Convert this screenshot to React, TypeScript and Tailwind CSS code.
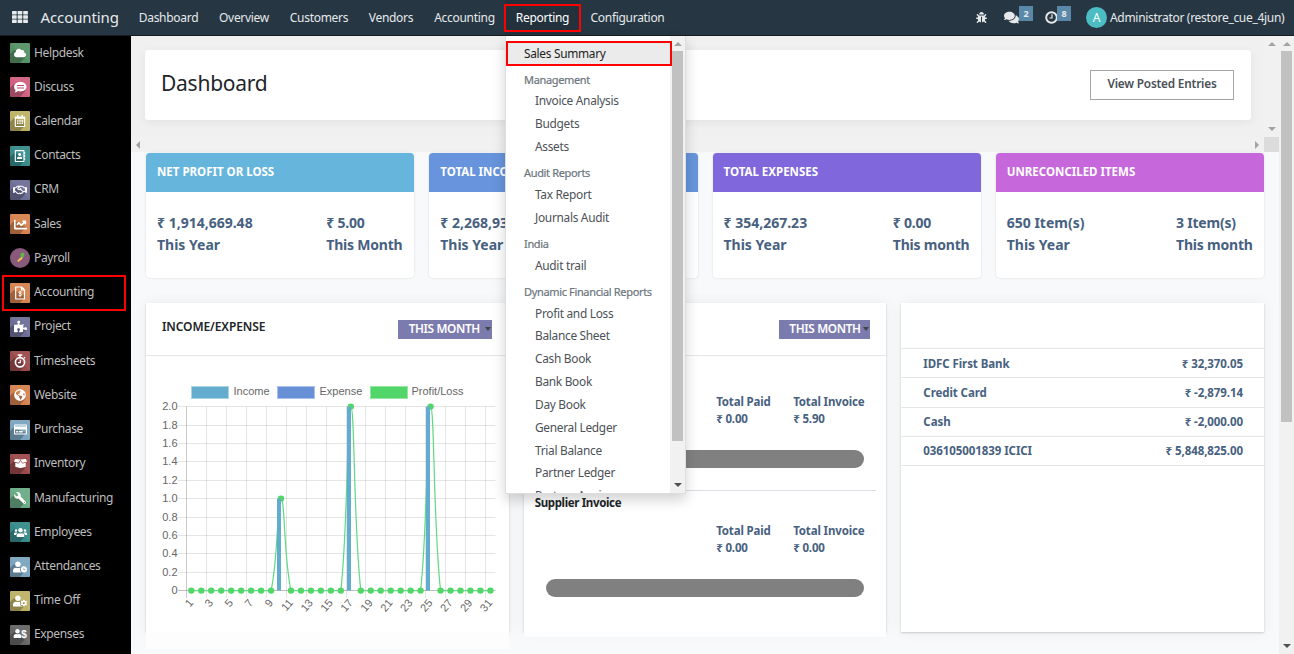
import type { ReactNode } from 'react';
import {
  FaBoxOpen,
  FaBug,
  FaChartLine,
  FaCloud,
  FaComments,
  FaGlobeAmericas,
  FaPuzzlePiece,
  FaRegAddressBook,
  FaRegCalendarAlt,
  FaRegCreditCard,
  FaRegHandshake,
  FaUser,
  FaUserClock,
  FaUserCog,
  FaUsers,
  FaWrench,
} from 'react-icons/fa';

const navItems = [
  { label: 'Dashboard', box: 'w-[79px]' },
  { label: 'Overview', box: 'w-[72px]' },
  { label: 'Customers', box: 'w-[78px]' },
  { label: 'Vendors', box: 'w-[66px]' },
  { label: 'Accounting', box: 'w-[81px]' },
  { label: 'Reporting', box: 'w-[75px] bg-[#22313c] text-white' },
  { label: 'Configuration', box: 'w-[95px]' },
];

const ClockIcon = () => (
  <svg viewBox="0 0 13 13" className="size-[13px]" fill="none" stroke="#e6e9eb">
    <circle cx="6.500" cy="6.500" r="5.300" strokeWidth="1.900" />
    <path d="M7 3.200v3.800H4.400" strokeWidth="1.200" />
  </svg>
);

const DiscussIcon = () => (
  <svg viewBox="0 0 14 14" className="size-[14px]">
    <path d="M7.300 2c3.500 0 6.200 2 6.200 4.700s-2.700 4.700-6.200 4.700c-.8 0-1.500-.1-2.200-.3C4.200 11.900 3 12.300 1.400 12.400c.7-.7 1.100-1.400 1.200-2.200C1.600 9.300 1.100 8 1.100 6.700 1.100 4 3.900 2 7.300 2z" fill="#fff" />
    <path d="M4 5.500h7M4 8h7" stroke="#b9506f" strokeWidth="1" />
  </svg>
);

const FileDollarIcon = () => (
  <svg viewBox="0 0 14 14" className="size-[14px]">
    <path d="M2.700 1h6l2.800 2.800V13H2.700z M8.500 1v3h3" fill="none" stroke="#fff" strokeWidth="1.200" />
    <path d="M8.700 6.200c-.7-.6-3-.6-3 .5 0 1.300 3 .6 3 2 0 1.200-2.300 1.200-3.200.4M7.100 5v6" fill="none" stroke="#fff" strokeWidth=".9" />
  </svg>
);

const StopwatchIcon = () => (
  <svg viewBox="0 0 14 14" className="size-[14px]" fill="none" stroke="#fff">
    <circle cx="7" cy="8.300" r="4.600" strokeWidth="1.700" />
    <path d="M4.700 .9h4.600M7 1v2.500M11 3.300l1 1" strokeWidth="1.500" />
    <path d="M7.300 5.800v2.800H5" strokeWidth="1.100" />
  </svg>
);

const PayrollIcon = () => (
  <svg viewBox="0 0 20 20" className="size-5">
    <path d="M10.500 6c0-1.200 3.200-1.800 3.800-.8.500 1.200-.2 4.300-1.800 4.600-1.300.3-2-.5-2-1.500z" fill="#5fb347" />
    <path d="M11.500 9l-1.700 1.200-2.600 2.600 1 1.100 3.400-2.500 1.200-1.800z" fill="#f3c34f" />
  </svg>
);

const UserDollarIcon = () => (
  <div className="flex items-end">
    <FaUser className="mb-[2px] size-[9px]" />
    <span className="-ml-px font-[Liberation_Sans] text-[10px] font-bold leading-[10px]">$</span>
  </div>
);

const apps: { label: string; bg: string; icon: ReactNode; round?: boolean; marked?: boolean }[] = [
  { label: 'Helpdesk', bg: 'bg-[#569166]', icon: <FaCloud className="size-[12px]" /> },
  { label: 'Discuss', bg: 'bg-[#d0607f]', icon: <DiscussIcon /> },
  { label: 'Calendar', bg: 'bg-[#bdb266]', icon: <FaRegCalendarAlt className="size-[12px]" /> },
  { label: 'Contacts', bg: 'bg-[#378b8b]', icon: <FaRegAddressBook className="size-[12px]" /> },
  { label: 'CRM', bg: 'bg-[#6d6e96]', icon: <FaRegHandshake className="size-[14px]" /> },
  { label: 'Sales', bg: 'bg-[#d4824f]', icon: <FaChartLine className="size-[13px]" /> },
  { label: 'Payroll', bg: 'bg-[#875a7b]', icon: <PayrollIcon />, round: true },
  { label: 'Accounting', bg: 'bg-[#d4824f]', icon: <FileDollarIcon />, marked: true },
  { label: 'Project', bg: 'bg-[#6d6e96]', icon: <FaPuzzlePiece className="size-[13px]" /> },
  { label: 'Timesheets', bg: 'bg-[#9a4a4c]', icon: <StopwatchIcon /> },
  { label: 'Website', bg: 'bg-[#d4824f]', icon: <FaGlobeAmericas className="size-[12px]" /> },
  { label: 'Purchase', bg: 'bg-[#7ba5bf]', icon: <FaRegCreditCard className="size-[13px]" /> },
  { label: 'Inventory', bg: 'bg-[#9a4a4c]', icon: <FaBoxOpen className="size-[13px]" /> },
  { label: 'Manufacturing', bg: 'bg-[#6aaa85]', icon: <FaWrench className="size-[12px] -scale-x-100" /> },
  { label: 'Employees', bg: 'bg-[#378b8b]', icon: <FaUsers className="size-[13px]" /> },
  { label: 'Attendances', bg: 'bg-[#7ba5bf]', icon: <FaUserClock className="size-[14px]" /> },
  { label: 'Time Off', bg: 'bg-[#bdb266]', icon: <FaUserCog className="size-[14px]" /> },
  { label: 'Expenses', bg: 'bg-[#666666]', icon: <UserDollarIcon /> },
];

function Sidebar() {
  return (
    <nav className="flex w-[131px] shrink-0 flex-col bg-black">
      {apps.map((a) => (
        <div key={a.label} className="relative flex h-[34.235px] shrink-0 items-start pl-[10px] pt-[7px]">
          <div
            className={`relative flex size-5 items-center justify-center overflow-hidden text-white ${a.bg} ${a.round ? 'rounded-full' : 'rounded-[1px]'}`}
          >
            {!a.round && (
              <svg viewBox="0 0 20 20" className="absolute inset-0 size-5">
                <path d="M4 7 L0 11 V20 H10 L16 13z" fill="#000" fillOpacity=".25" />
                <path d="M0 0H20V20z" fill="#fff" fillOpacity=".05" />
              </svg>
            )}
            <div className="relative">{a.icon}</div>
          </div>
          <span className="ml-[4px] mt-[-0.5px] text-[12px] leading-5 tracking-[-0.35px] text-[#bdbdbd]">{a.label}</span>
          {a.marked && <div className="absolute left-[2px] top-[-1px] h-[36px] w-[124px] border-2 border-[#f00]" />}
        </div>
      ))}
    </nav>
  );
}

type Dir = 'up' | 'down' | 'left' | 'right';
const arrowPaths: Record<Dir, string> = {
  up: 'M0 6L4 2L8 6z',
  down: 'M0 2L4 6L8 2z',
  left: 'M6 0L2 4L6 8z',
  right: 'M2 0L6 4L2 8z',
};
const Arrow = ({ dir, dark }: { dir: Dir; dark?: boolean }) => (
  <svg viewBox="0 0 8 8" className="size-2 shrink-0">
    <path d={arrowPaths[dir]} fill={dark ? '#505050' : '#a3a3a3'} />
  </svg>
);

function Navbar() {
  return (
    <header className="flex h-9 shrink-0 items-center border-b border-[#141d24] bg-[#263743] text-[12px] text-[#e6e9eb]">
      <svg viewBox="0 0 16 12" className="mb-px ml-3 h-3 w-4 shrink-0">
        {[0, 4.2, 8.4].map((y) => [0, 5.6, 11.2].map((x) => <rect key={`${x}-${y}`} x={x} y={y} width="4.700" height="3.500" rx=".4" fill="#e8ebed" />))}
      </svg>
      <div className="ml-[12.500px] w-[88.500px] whitespace-nowrap text-[15px] tracking-[-0.1px]">Accounting</div>
      <div className="flex h-full">
        {navItems.map((n) => (
          <div key={n.label} className={`flex items-center justify-center whitespace-nowrap pt-px tracking-[-0.3px] ${n.box}`}>
            {n.label}
          </div>
        ))}
      </div>
      <div className="ml-auto flex h-full items-center">
        <FaBug className="mb-px size-[11px]" />
        <div className="relative ml-[17px] flex h-full w-[29px] items-center">
          <FaComments className="size-[15px]" />
          <span className="absolute left-[15px] top-[6px] flex h-[15px] w-[14px] items-center justify-center bg-[#5a88a8] text-[9px] font-bold">2</span>
        </div>
        <div className="relative ml-[12px] flex h-full w-[27px] items-center">
          <ClockIcon />
          <span className="absolute left-[12px] top-[6px] flex h-[15px] w-[14px] items-center justify-center bg-[#5a88a8] text-[9px] font-bold">8</span>
        </div>
        <div className="ml-[14px] flex size-[21px] items-center justify-center rounded-full bg-[#4dbdc4] text-[12px] text-white">A</div>
        <div className="ml-[3px] w-[184px] whitespace-nowrap pt-px tracking-[-0.3px]">Administrator (restore_cue_4jun)</div>
      </div>
    </header>
  );
}

function HeaderRegion() {
  return (
    <div className="flex h-[117px] shrink-0 flex-col">
      <div className="flex h-[101px] bg-[#f0f0f0]">
        <div className="flex-1 pl-[14px] pr-[13px] pt-[14px]">
          <div className="flex h-[70px] items-center justify-between rounded-[3px] bg-white pl-4 pr-[17px] shadow-[0_2px_10px_rgba(0,0,0,0.06)]">
            <h1 className="mb-[3px] text-[21px] tracking-[-0.25px] text-[#212529]">Dashboard</h1>
            <button className="h-[30px] w-[144px] border border-[#a5a5a5] pb-[2px] text-[11.800px] font-semibold tracking-[-0.2px] text-[#495057]">
              View Posted Entries
            </button>
          </div>
        </div>
        <div className="flex w-[15px] flex-col items-center justify-between bg-[#f1f1f1] py-1">
          <Arrow dir="up" />
          <Arrow dir="down" />
        </div>
      </div>
      <div className="flex h-[15px]">
        <div className="flex flex-1 items-center justify-between bg-[#f1f1f1] px-[3px]">
          <Arrow dir="left" />
          <Arrow dir="right" />
        </div>
        <div className="w-[15px] bg-[#dcdcdc]" />
      </div>
    </div>
  );
}

const stats = [
  { title: 'NET PROFIT OR LOSS', bg: 'bg-[#66b5dc]', a: '₹ 1,914,669.48', b: '₹ 5.00', m: 'This Month' },
  { title: 'TOTAL INCOME', bg: 'bg-[#6794dc]', a: '₹ 2,268,936.71', b: '₹ 5.00', m: 'This Month' },
  { title: 'TOTAL EXPENSES', bg: 'bg-[#8067dc]', a: '₹ 354,267.23', b: '₹ 0.00', m: 'This month' },
  { title: 'UNRECONCILED ITEMS', bg: 'bg-[#c767dc]', a: '650 Item(s)', b: '3 Item(s)', m: 'This month' },
];

function Stats() {
  return (
    <div className="grid grid-cols-4 gap-x-[15px]">
      {stats.map((s) => (
        <div key={s.title} className="h-[125px] overflow-hidden rounded-[4px] bg-white shadow-[0_0_2px_rgba(0,0,0,0.16)]">
          <div className={`flex h-[39px] items-center px-[11px] pb-[2px] text-[11.500px] font-bold text-white ${s.bg}`}>{s.title}</div>
          <div className="flex justify-between px-[11px] pt-5 text-[14px] font-bold leading-[22px] text-[#47617f]">
            <div>
              <p>{s.a}</p>
              <p>This Year</p>
            </div>
            <div className="w-[77px] whitespace-nowrap tracking-[-0.2px]">
              <p>{s.b}</p>
              <p>{s.m}</p>
            </div>
          </div>
        </div>
      ))}
    </div>
  );
}

const days = Array.from({ length: 31 }, (_, i) => i);
const px = (i: number) => 45.3 + i * 9.97;
const py = (v: number) => 287.6 - v * 92;
const profit = days.map((i) => (i === 9 ? 1 : i === 16 || i === 24 ? 2 : 0));

function curve() {
  let d = `M${px(0)} ${py(0)}`;
  for (let i = 1; i < 31; i++) {
    const v = profit[i];
    const prev = profit[i - 1];
    const x0 = px(i - 1);
    const x1 = px(i);
    if (v > 0) d += `C${x0 + 7.4} ${py(v * 0.37)} ${x1 - 4} ${py(v)} ${x1} ${py(v)}`;
    else if (prev > 0) d += `C${x0 + 4} ${py(prev)} ${x1 - 7.4} ${py(prev * 0.37)} ${x1} ${py(0)}`;
    else d += `L${x1} ${py(0)}`;
  }
  return d;
}

function Chart() {
  return (
    <svg viewBox="0 0 362 329" className="absolute left-0 top-0 h-[329px] w-[362px]" fontFamily="Liberation Sans, sans-serif" fontSize="11" fill="#666">
      <rect x="45.500" y="83.500" width="37" height="12" fill="#65adce" stroke="#a9d3e6" />
      <rect x="131.500" y="83.500" width="37" height="12" fill="#6890d6" stroke="#a9c4ec" />
      <rect x="224.500" y="83.500" width="37" height="12" fill="#52d669" stroke="#92e8a2" />
      <text x="87.500" y="92">Income</text>
      <text x="173.500" y="92">Expense</text>
      <text x="265.500" y="92">Profit/Loss</text>
      {Array.from({ length: 11 }, (_, i) => (
        <g key={i}>
          <path d={`M32 ${Math.round(103.6 + i * 18.4 - 0.5) + 0.5}H349.500`} stroke="#000" strokeOpacity={i === 10 ? 0.25 : 0.1} />
          <text x="31.500" y={107.2 + i * 18.4} textAnchor="end">
            {i === 10 ? '0' : ((10 - i) / 5).toFixed(1)}
          </text>
        </g>
      ))}
      {Array.from({ length: 16 }, (_, i) => {
        const x = Math.floor(40.5 + i * 19.94) + 0.5;
        return (
          <g key={i}>
            <path d={`M${x} 103.500V295`} stroke="#000" strokeOpacity={i === 0 ? 0.2 : 0.1} />
            <text transform={`translate(${px(i * 2) - 0.5} 297.500) rotate(-50)`} textAnchor="end" y="4">
              {i * 2 + 1}
            </text>
          </g>
        );
      })}
      <path d={curve()} fill="none" stroke="#5fd982" strokeWidth="1.200" />
      {days.map((i) => (
        <circle key={i} cx={px(i)} cy={py(profit[i])} r="3.200" fill="#52d669" />
      ))}
      {days.filter((i) => profit[i] > 0).map((i) => (
        <rect key={i} x={Math.round(px(i) - 4.2)} y={py(profit[i])} width="4" height={profit[i] * 92} fill="#62acd0" />
      ))}
    </svg>
  );
}

const MonthSelect = ({ box }: { box: string }) => (
  <div className={`flex h-[19px] items-center justify-between whitespace-nowrap bg-[#7c7bad] text-[11.800px] font-semibold tracking-[-0.35px] text-white ${box}`}>
    THIS MONTH
    <svg viewBox="0 0 6 4" className="mr-[1px] h-1 w-[6px]">
      <path d="M0 0h6L3 4z" fill="#444" />
    </svg>
  </div>
);

function Totals({ invoice }: { invoice: string }) {
  return (
    <>
      <div className="flex gap-[21px] pl-[181.500px] text-[11.500px] font-bold leading-[17px] tracking-[-0.15px] text-[#47617f]">
        <div className="w-[56px] whitespace-nowrap">
          <p>Total Paid</p>
          <p>₹ 0.00</p>
        </div>
        <div className="whitespace-nowrap">
          <p>Total Invoice</p>
          <p>₹ {invoice}</p>
        </div>
      </div>
      <div className="ml-[11px] mt-[23px] h-[18px] w-[318px] rounded-[9px] bg-[#808080]" />
    </>
  );
}

const panel = 'bg-white shadow-[0_1px_2px_rgba(0,0,0,0.18),0_0_14px_rgba(0,0,0,0.05)]';

function Panels() {
  return (
    <div className="mt-[25px] grid grid-cols-3 gap-x-[15px]">
      <section className="h-[346px]">
        <div className={`relative h-[329px] ${panel}`}>
          <div className="flex h-[53px] items-center justify-between border-b border-[#e6e6e6] pl-4 pr-[17px]">
            <h2 className="mb-1 text-[12px] font-semibold tracking-[-0.1px] text-[#212529]">INCOME/EXPENSE</h2>
            <MonthSelect box="w-[94px] pl-[11px]" />
          </div>
          <Chart />
        </div>
        <div className="relative h-[17px] bg-[#fdfdfd]" />
      </section>
      <section className="h-[334px]">
        <div className={`h-[329px] ${panel}`}>
          <div className="flex h-[53px] items-center justify-end border-b border-[#e6e6e6] pr-4">
            <MonthSelect box="w-[91px] pl-[10px]" />
          </div>
          <div className="pl-[11px] pr-[10px] pt-[37px]">
            <Totals invoice="5.90" />
            <div className="mt-[22px] border-t border-[#dcdce4] pt-[3px] text-[11.500px] font-bold leading-[17px] tracking-[-0.35px] text-[#212529]">Supplier Invoice</div>
            <div className="pt-[11px]">
              <Totals invoice="0.00" />
            </div>
          </div>
        </div>
        <div className="relative h-[5px] bg-[#fdfdfd]" />
      </section>
      <section className={`h-[329px] ${panel}`}>
        <div className="h-[46px] border-b border-[#e6e6e6]" />
        {[
          ['IDFC First Bank', '₹ 32,370.05'],
          ['Credit Card', '₹ -2,879.14'],
          ['Cash', '₹ -2,000.00'],
          ['036105001839 ICICI', '₹ 5,848,825.00'],
        ].map(([n, v]) => (
          <div key={n} className="flex h-[29.250px] items-center justify-between border-b border-[#e6e6e6] pl-[22px] pr-[21px] text-[11.500px] font-bold tracking-[-0.08px] text-[#47617f]">
            <span>{n}</span>
            <span>{v}</span>
          </div>
        ))}
      </section>
    </div>
  );
}

const menu: { group: string; items: string[] }[] = [
  { group: 'Management', items: ['Invoice Analysis', 'Budgets', 'Assets'] },
  { group: 'Audit Reports', items: ['Tax Report', 'Journals Audit'] },
  { group: 'India', items: ['Audit trail'] },
  {
    group: 'Dynamic Financial Reports',
    items: ['Profit and Loss', 'Balance Sheet', 'Cash Book', 'Bank Book', 'Day Book', 'General Ledger', 'Trial Balance', 'Partner Ledger', 'Partner Ageing'],
  },
];

function ReportingMenu() {
  return (
    <div className="absolute left-[505px] top-9 flex h-[458px] w-[181px] overflow-hidden border border-t-0 border-[#dcdee0] bg-white shadow-[0_6px_12px_rgba(0,0,0,0.175)]">
      <div className="flex-1 overflow-hidden whitespace-nowrap pt-[6px] text-[11.900px] tracking-[-0.3px] text-[#4c5157]">
        <div className="flex h-[23px] items-center bg-[#ebebeb] pl-[18px] text-[#222]">Sales Summary</div>
        {menu.map((g) => (
          <div key={g.group}>
            <div className="flex h-[25px] items-center pl-[18px] pt-[5px] text-[11px] tracking-[-0.35px] text-[#6c757d] [-webkit-text-stroke:0.2px]">{g.group}</div>
            {g.items.map((i) => (
              <div key={i} className="flex h-[22.850px] items-center pl-[29px]">
                {i}
              </div>
            ))}
          </div>
        ))}
      </div>
      <div className="flex w-[15px] flex-col items-center justify-between bg-[#f1f1f1] pb-1 pt-1">
        <Arrow dir="up" />
        <div className="mb-auto mt-[3px] h-[390px] w-[11px] bg-[#c1c1c1]" />
        <Arrow dir="down" dark />
      </div>
    </div>
  );
}

export default function App() {
  return (
    <div className="relative flex h-[654px] w-[1294px] flex-col overflow-hidden bg-[#f8f9fb] font-['Noto_Sans',sans-serif]">
      <Navbar />
      <div className="flex min-h-0 flex-1">
        <Sidebar />
        <main className="flex w-[1148px] shrink-0 flex-col overflow-hidden">
          <HeaderRegion />
          <div className="pl-[15px] pr-[15px]">
            <Stats />
            <Panels />
          </div>
        </main>
        <div className="flex w-[15px] flex-col items-center bg-[#f1f1f1] pb-1 pt-1">
          <Arrow dir="up" />
          <div className="mb-auto mt-[3px] h-[371px] w-[11px] bg-[#c1c1c1]" />
          <Arrow dir="down" dark />
        </div>
      </div>
      <ReportingMenu />
      <div className="absolute left-[504px] top-[4px] h-[28px] w-[77px] border-2 border-[#f00]" />
      <div className="absolute left-[506px] top-[41px] h-[25px] w-[166px] border-2 border-[#f00]" />
    </div>
  );
}
